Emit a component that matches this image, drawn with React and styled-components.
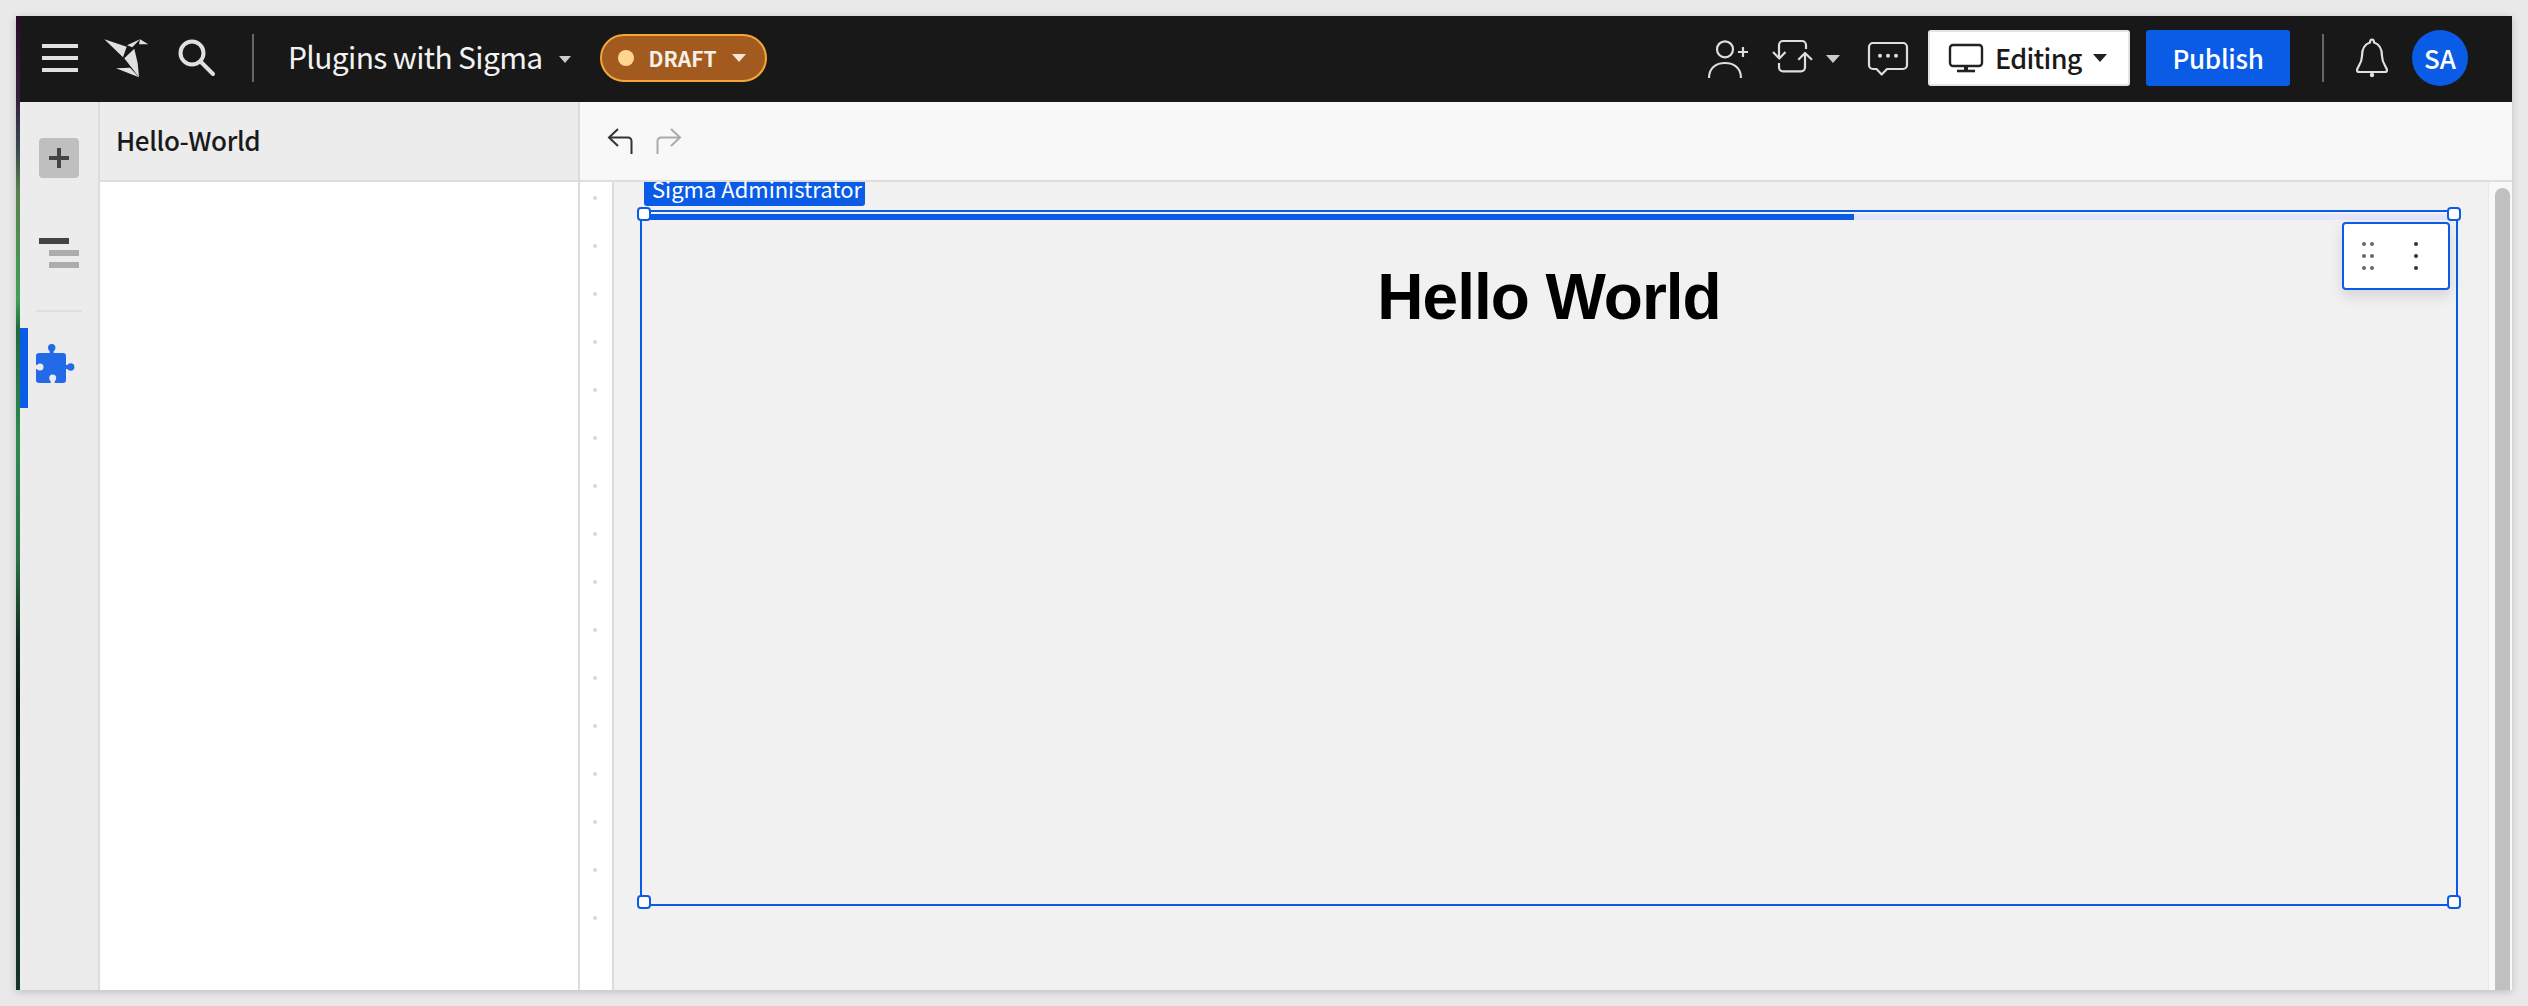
import React from 'react';
import styled, { createGlobalStyle } from 'styled-components';

const FONT = '"Noto Sans CJK JP", "Noto Sans", "Liberation Sans", sans-serif';
const BLUE = '#0a5ce6';

const GlobalStyle = createGlobalStyle`
  html, body {
    margin: 0;
    background: #e9e9e9;
  }
  * {
    box-sizing: border-box;
  }
`;

const Page = styled.div`
  width: 2528px;
  height: 1006px;
  padding: 16px;
  overflow: hidden;
  font-family: ${FONT};
`;

const Window = styled.div`
  display: flex;
  width: 2496px;
  height: 974px;
  overflow: hidden;
  box-shadow: 0 2px 8px rgba(0, 0, 0, 0.18);
`;

const Strip = styled.div`
  flex: none;
  width: 4px;
  background: linear-gradient(
    180deg,
    #2a0a2a 0,
    #352040 84px,
    #3a4a50 134px,
    #5a8050 174px,
    #3fa055 284px,
    #1f6a3a 314px,
    #2f8a50 424px,
    #2a7048 544px,
    #112a20 624px,
    #0c1a16 684px,
    #153525 974px
  );
`;

const Main = styled.div`
  flex: 1;
  display: flex;
  flex-direction: column;
  min-width: 0;
`;

const Header = styled.header`
  flex: none;
  display: flex;
  align-items: center;
  height: 86px;
  padding-left: 22px;
  background: #181818;
  color: #fff;
`;

const Burger = styled.div`
  display: flex;
  flex-direction: column;
  gap: 8px;
  width: 36px;
  margin-top: -2px;

  span {
    height: 4px;
    background: #e0e0e0;
  }
`;

const HeaderIcon = styled.svg`
  flex: none;
  display: block;
  margin-left: ${p => p.$left || 0}px;
  margin-top: ${p => p.$top || 0}px;
`;

const VRule = styled.div`
  flex: none;
  width: 2px;
  height: 48px;
  margin-left: ${p => p.$left}px;
  margin-top: -2px;
  background: #666;
`;

const Title = styled.div`
  margin-left: 34px;
  margin-top: -6px;
  font-size: 30px;
  line-height: 40px;
  letter-spacing: -0.65px;
  color: #f2f2f2;
  white-space: nowrap;
`;

const Caret = styled.span`
  flex: none;
  width: 0;
  height: 0;
  margin-left: ${p => p.$left || 0}px;
  border-left: ${p => p.$size || 6}px solid transparent;
  border-right: ${p => p.$size || 6}px solid transparent;
  border-top: ${p => (p.$size || 6) + 1}px solid ${p => p.$color || '#ddd'};
`;

const DraftPill = styled.div`
  flex: none;
  display: flex;
  align-items: center;
  width: 167px;
  height: 48px;
  margin-left: 29px;
  margin-top: -2px;
  padding-left: 16px;
  border: 2px solid #f5a63a;
  border-radius: 24px;
  background: #a35a1e;
  font-size: 21px;
  font-weight: 700;
  color: #f6f0e8;
`;

const DraftDot = styled.span`
  width: 16px;
  height: 16px;
  margin-right: 15px;
  border-radius: 50%;
  background: #ffd590;
`;

const Spacer = styled.div`
  flex: 1;
`;

const EditingButton = styled.div`
  flex: none;
  display: flex;
  align-items: center;
  width: 202px;
  height: 56px;
  margin-left: 18px;
  margin-top: -2px;
  padding-left: 18px;
  border-radius: 3px;
  background: #fff;
  border: 2px solid #e4e4e4;
  color: #1a1a1a;
  font-size: 27px;
  font-weight: 500;
`;

const EditingLabel = styled.span`
  margin-left: 11px;
  margin-top: -2px;
  letter-spacing: -0.7px;
`;

const PublishButton = styled.div`
  flex: none;
  display: flex;
  align-items: center;
  justify-content: center;
  width: 144px;
  height: 56px;
  margin-left: 16px;
  margin-top: -2px;
  padding-bottom: 2px;
  border-radius: 3px;
  background: ${BLUE};
  color: #fff;
  font-size: 26px;
  font-weight: 500;
  letter-spacing: -0.3px;
`;

const Avatar = styled.div`
  flex: none;
  display: flex;
  align-items: center;
  justify-content: center;
  width: 56px;
  height: 56px;
  margin-left: 23px;
  margin-right: 44px;
  margin-top: -2px;
  padding-bottom: 2px;
  border-radius: 50%;
  background: ${BLUE};
  color: #fff;
  font-size: 26px;
  font-weight: 500;
`;

const Body = styled.div`
  flex: 1;
  display: flex;
  min-height: 0;
`;

const Rail = styled.nav`
  flex: none;
  display: flex;
  flex-direction: column;
  align-items: center;
  width: 80px;
  padding-top: 36px;
  border-right: 2px solid #dcdcdc;
  background: #ececec;
`;

const AddButton = styled.div`
  display: flex;
  align-items: center;
  justify-content: center;
  width: 40px;
  height: 40px;
  border-radius: 4px;
  background: #bfbfbf;
`;

const Outline = styled.div`
  display: grid;
  grid-template-columns: 40px;
  row-gap: 6px;
  margin-top: 60px;
`;

const OutlineBar = styled.span`
  display: block;
  width: 30px;
  height: 6px;
  margin-left: ${p => (p.$child ? 10 : 0)}px;
  background: ${p => (p.$child ? '#adadad' : '#444')};
`;

const RailRule = styled.div`
  width: 46px;
  height: 2px;
  margin-top: 42px;
  background: #dedede;
`;

const RailItem = styled.div`
  align-self: stretch;
  display: flex;
  align-items: flex-start;
  height: 80px;
  margin-top: 16px;
  padding: 16px 0 0 8px;
  border-left: 8px solid ${BLUE};
`;

const Panel = styled.aside`
  flex: none;
  display: flex;
  flex-direction: column;
  width: 480px;
  border-right: 2px solid #dcdcdc;
  background: #fff;
`;

const PanelHead = styled.div`
  display: flex;
  align-items: center;
  height: 80px;
  padding: 0 0 3px 16px;
  border-bottom: 2px solid #dedede;
  background: #ececec;
  color: #1a1a1a;
  font-size: 26px;
  font-weight: 500;
  letter-spacing: -0.4px;
`;

const Work = styled.div`
  flex: 1;
  display: flex;
  flex-direction: column;
  min-width: 0;
`;

const Toolbar = styled.div`
  flex: none;
  display: flex;
  align-items: center;
  gap: 23px;
  height: 80px;
  padding-left: 27px;
  border-bottom: 2px solid #dedede;
  background: #f8f8f8;
`;

const Stage = styled.div`
  flex: 1;
  display: flex;
  min-height: 0;
`;

const Ruler = styled.div`
  flex: none;
  display: flex;
  flex-direction: column;
  align-items: center;
  gap: 44px;
  width: 34px;
  padding-top: 14px;
  padding-right: 2px;
  border-right: 2px solid #dcdcdc;
  background: #fff;

  span {
    flex: none;
    width: 4px;
    height: 4px;
    border-radius: 50%;
    background: #d8d8d8;
  }
`;

const Canvas = styled.main`
  flex: 1;
  min-width: 0;
  padding: 28px 0 0 26px;
  background: #f1f1f1;
`;

const Frame = styled.section`
  position: relative;
  width: 1818px;
  height: 696px;
  border: 2px solid ${BLUE};
`;

const OwnerTag = styled.div`
  position: absolute;
  left: 2px;
  bottom: calc(100% + 6px);
  width: 221px;
  height: 24px;
  border-radius: 0 0 3px 3px;
  background: ${BLUE};
  color: #fff;
  font-size: 22px;
  line-height: 12px;
  padding-left: 8px;
  white-space: nowrap;
`;

const Progress = styled.div`
  height: 6px;
  margin-top: 2px;
  background: #e6e4fa;

  div {
    height: 100%;
    background: ${BLUE};
  }
`;

const Heading = styled.h1`
  margin: 39px 0 0;
  font-family: "Liberation Sans", Arial, sans-serif;
  font-size: 64px;
  font-weight: 700;
  line-height: 76px;
  letter-spacing: -1px;
  text-align: center;
  color: #000;
`;

const Handle = styled.span`
  position: absolute;
  width: 14px;
  height: 14px;
  border: 2px solid ${BLUE};
  border-radius: 4px;
  background: #fff;
  left: ${p => (p.$right ? 'auto' : '-5px')};
  right: ${p => (p.$right ? '-5px' : 'auto')};
  top: ${p => (p.$bottom ? 'auto' : '-5px')};
  bottom: ${p => (p.$bottom ? '-5px' : 'auto')};
`;

const FloatBar = styled.div`
  position: absolute;
  top: 10px;
  right: 6px;
  display: flex;
  align-items: flex-start;
  width: 108px;
  height: 68px;
  padding: 18px 0 0 18px;
  border: 2px solid ${BLUE};
  border-radius: 4px;
  background: #fff;
  box-shadow: 0 6px 14px rgba(0, 0, 0, 0.12);
`;

const Dots = styled.div`
  display: grid;
  grid-template-columns: repeat(${p => p.$cols}, 4px);
  grid-auto-rows: 4px;
  column-gap: 4px;
  row-gap: 8px;
  margin-left: ${p => p.$left || 0}px;

  span {
    width: 4px;
    height: 4px;
    border-radius: 50%;
    background: ${p => p.$color};
  }
`;

const ScrollTrack = styled.div`
  flex: none;
  width: 24px;
  padding: 6px 2px 0 6px;
  border-left: 1px solid #e8e8e8;
  background: #f8f8f8;
`;

const ScrollThumb = styled.div`
  height: 100%;
  border-radius: 8px 8px 0 0;
  background: #c0c0c0;
`;

const Logo = () => (
  <HeaderIcon $left={26} $top={-2} width="46" height="40" viewBox="0 0 46 40" fill="#e0e0e0">
    <polygon points="0.3,1.3 22.7,8.7 19,19.3" />
    <polygon points="23,7.3 36,1.3 28.3,9.3" />
    <polygon points="36,1.3 44.3,6.3 35,6.3" />
    <polygon points="30.3,10.7 20.3,20.3 35,39.3 33.7,25.3" />
    <polygon points="12,30.3 26,29.7 35,39.3" />
  </HeaderIcon>
);

const SearchIcon = () => (
  <HeaderIcon $left={28} $top={-2} width="38" height="38" viewBox="0 0 38 38" fill="none" stroke="#e0e0e0" strokeWidth="4" strokeLinecap="round">
    <circle cx="14" cy="14" r="11.5" />
    <path d="M22.5 22.5 L35 35" />
  </HeaderIcon>
);

const AddUserIcon = () => (
  <HeaderIcon width="45" height="44" viewBox="0 0 45 44" fill="none" stroke="#dedede" strokeWidth="2.2">
    <circle cx="20" cy="12.3" r="8" />
    <path d="M4 41 C4 31 11 26 20 26 S36 31 36 41" />
    <path d="M38 10 V20 M33 15 H43" />
  </HeaderIcon>
);

const SwapIcon = () => (
  <HeaderIcon $left={20} $top={-2} width="44" height="40" viewBox="0 0 44 40" fill="none" stroke="#dedede" strokeWidth="2.2" strokeLinejoin="round">
    <path d="M36 11 V7 a4 4 0 0 0 -4 -4 H13 a4 4 0 0 0 -4 4 V20" />
    <path d="M3 14 L9.3 20.5 L15.5 14" />
    <path d="M28.3 21.7 L35 15 L42 21.7" />
    <path d="M35 15 V29.3 a4 4 0 0 1 -4 4 H13 a4 4 0 0 1 -4 -4 V25" />
  </HeaderIcon>
);

const CommentIcon = () => (
  <HeaderIcon $left={20} $top={2} width="50" height="40" viewBox="0 0 50 40" fill="none" stroke="#dedede" strokeWidth="2.2" strokeLinejoin="round">
    <path d="M13 3 H43 a4 4 0 0 1 4 4 V25 a4 4 0 0 1 -4 4 H27 L21.7 34.5 L16.5 29 H13 a4 4 0 0 1 -4 -4 V7 a4 4 0 0 1 4 -4 Z" />
    <g fill="#dedede" stroke="none">
      <circle cx="20" cy="15.7" r="2" />
      <circle cx="28" cy="15.7" r="2" />
      <circle cx="36" cy="15.7" r="2" />
    </g>
  </HeaderIcon>
);

const MonitorIcon = () => (
  <HeaderIcon width="36" height="30" viewBox="0 0 36 30" fill="none" stroke="#222" strokeWidth="2.4">
    <rect x="2" y="2" width="32" height="21" rx="3" />
    <path d="M18 23 V27" strokeWidth="4" />
    <path d="M9 28 H27" strokeWidth="2.6" />
  </HeaderIcon>
);

const BellIcon = () => (
  <HeaderIcon $left={31} $top={-2} width="34" height="40" viewBox="0 0 34 40" fill="none" stroke="#e0e0e0" strokeWidth="2.2" strokeLinejoin="round">
    <path d="M2 32 C2 29 7 26 7 18 C7 10 10 6 15 4.5 C15 0.5 19 0.5 19 4.5 C24 6 27 10 27 18 C27 26 32 29 32 32 C32 33 31 34 30 34 H4 C3 34 2 33 2 32 Z" />
    <circle cx="17" cy="37" r="2.2" fill="#e0e0e0" stroke="none" />
  </HeaderIcon>
);

const PuzzleIcon = () => (
  <svg width="40" height="40" viewBox="0 0 40 40">
    <g fill="#2469e8">
      <rect x="0" y="9" width="30" height="30" rx="3" />
      <circle cx="15.7" cy="3.7" r="3.7" />
      <rect x="13.7" y="5" width="4" height="6" />
      <circle cx="34.7" cy="23" r="3.7" />
      <rect x="28" y="21" width="6" height="4" />
    </g>
    <g fill="#ececec">
      <circle cx="4" cy="23" r="3.5" />
      <rect x="-1" y="21" width="4" height="4" />
      <circle cx="16.7" cy="34" r="3.5" />
      <rect x="14.7" y="35" width="4" height="5" />
    </g>
  </svg>
);

const ArrowSvg = styled.svg`
  transform: ${p => (p.$flip ? 'scaleX(-1)' : 'none')};
`;

const ArrowIcon = ({ color, flip }) => (
  <ArrowSvg $flip={flip} width="26" height="28" viewBox="0 0 26 28" fill="none" stroke={color} strokeWidth="2">
    <path d="M11 2 L2 10.5 L11 19" />
    <path d="M2 10.5 H21 a3.5 3.5 0 0 1 3.5 3.5 V27" />
  </ArrowSvg>
);

const dotCells = n => Array.from({ length: n }, (_, i) => <span key={i} />);

export default function App() {
  return (
    <Page>
      <GlobalStyle />
      <Window>
        <Strip />
        <Main>
          <Header>
            <Burger>
              <span />
              <span />
              <span />
            </Burger>
            <Logo />
            <SearchIcon />
            <VRule $left={36} />
            <Title>Plugins with Sigma</Title>
            <Caret $left={16} $size={6} $color="#ccc" />
            <DraftPill>
              <DraftDot />
              DRAFT
              <Caret $left={15} $size={7} $color="#f3e6d8" />
            </DraftPill>
            <Spacer />
            <AddUserIcon />
            <SwapIcon />
            <Caret $left={12} $size={7} $color="#ccc" />
            <CommentIcon />
            <EditingButton>
              <MonitorIcon />
              <EditingLabel>Editing</EditingLabel>
              <Caret $left={11} $size={7} $color="#222" />
            </EditingButton>
            <PublishButton>Publish</PublishButton>
            <VRule $left={32} />
            <BellIcon />
            <Avatar>SA</Avatar>
          </Header>
          <Body>
            <Rail>
              <AddButton>
                <svg width="20" height="20" viewBox="0 0 20 20" fill="#444">
                  <rect x="8" y="0" width="4" height="20" />
                  <rect x="0" y="8" width="20" height="4" />
                </svg>
              </AddButton>
              <Outline>
                <OutlineBar />
                <OutlineBar $child />
                <OutlineBar $child />
              </Outline>
              <RailRule />
              <RailItem>
                <PuzzleIcon />
              </RailItem>
            </Rail>
            <Panel>
              <PanelHead>Hello-World</PanelHead>
            </Panel>
            <Work>
              <Toolbar>
                <ArrowIcon color="#333" />
                <ArrowIcon color="#aaa" flip />
              </Toolbar>
              <Stage>
                <Ruler>{dotCells(16)}</Ruler>
                <Canvas>
                  <Frame>
                    <OwnerTag>Sigma Administrator</OwnerTag>
                    <Progress>
                      <div style={{ width: '66.8%' }} />
                    </Progress>
                    <Heading>Hello World</Heading>
                    <Handle />
                    <Handle $right />
                    <Handle $bottom />
                    <Handle $right $bottom />
                    <FloatBar>
                      <Dots $cols={2} $color="#666">{dotCells(6)}</Dots>
                      <Dots $cols={1} $color="#333" $left={40}>{dotCells(3)}</Dots>
                    </FloatBar>
                  </Frame>
                </Canvas>
                <ScrollTrack>
                  <ScrollThumb />
                </ScrollTrack>
              </Stage>
            </Work>
          </Body>
        </Main>
      </Window>
    </Page>
  );
}
